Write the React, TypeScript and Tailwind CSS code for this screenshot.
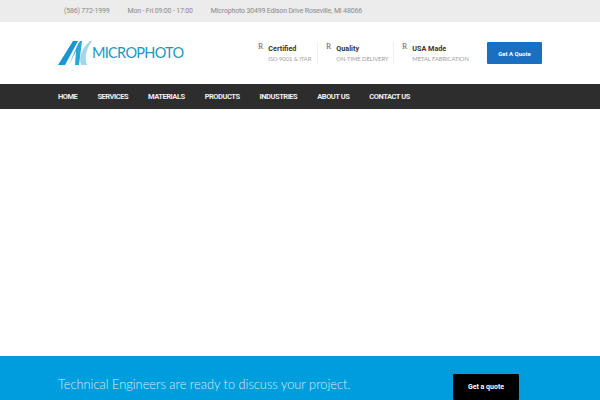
import React from 'react';

const navItems = ['HOME', 'SERVICES', 'MATERIALS', 'PRODUCTS', 'INDUSTRIES', 'ABOUT US', 'CONTACT US'];

const badges = [
  { title: 'Certified', sub: 'ISO 9001 & ITAR', width: 'w-[68px]' },
  { title: 'Quality', sub: 'ON-TIME DELIVERY', width: 'w-[76px]' },
  { title: 'USA Made', sub: 'METAL FABRICATION', width: 'w-[93px]' },
];

const Logo = () => (
  <svg width="34" height="26" viewBox="0 0 34 26" className="shrink-0">
    <path d="M0 25 L15 1 L20 1 L7 25 Z" fill="#1a95cf" />
    <path d="M11 25 L20 4 L22 1 L24 1 L21 25 L17 25 L18 11 Z" fill="#2aa6d8" />
    <path d="M23 25 C20 16 25 7 32 1 L34 1 C29 8 26 16 29 25 Z" fill="#a5d5ea" />
  </svg>
);

const App: React.FC = () => {
  return (
    <div className="w-[600px] h-[400px] bg-white flex flex-col overflow-hidden font-['Roboto',sans-serif]">
      {/* top bar */}
      <div className="h-[22px] bg-[#ececec] flex items-center pl-16 gap-[18px] text-[7px] tracking-[-0.17px] text-[#8a8a8a]">
        <span>(586) 772-1999</span>
        <span>Mon - Fri 09:00 - 17:00</span>
        <span>Microphoto 30499 Edison Drive Roseville, MI 48066</span>
      </div>

      {/* header */}
      <div className="h-[62px] flex items-center pl-[58px] pr-[58px]">
        <div className="flex items-center gap-0">
          <Logo />
          <span className="font-['Lato',sans-serif] text-[14.5px] tracking-[-0.7px] text-[#2196c4] leading-none">MICROPHOTO</span>
        </div>
        <div className="ml-auto flex items-center">
          {badges.map((b, i) => (
            <div
              key={b.title}
              className={`flex h-[22px] gap-[5px] pl-2 ${b.width} ${i < 2 ? 'border-r border-[#eeeeee]' : ''}`}
            >
              <span className="font-['Liberation_Serif',serif] text-[8px] leading-[10px] text-[#666666]">R</span>
              <div className="flex flex-col pt-px">
                <span className="text-[7.2px] leading-[11px] font-bold text-[#333333] whitespace-nowrap">{b.title}</span>
                <span className="font-['Lato',sans-serif] text-[5.8px] leading-[9px] tracking-[-0.05px] text-[#a0a0a0] whitespace-nowrap">{b.sub}</span>
              </div>
            </div>
          ))}
          <button className="w-[55px] h-[22px] bg-[#1b6fc0] rounded-[1px] text-white text-[6px] font-bold">
            Get A Quote
          </button>
        </div>
      </div>

      {/* nav */}
      <div className="h-[25px] bg-[#2d2d2d] flex items-center pl-[58px] gap-5 text-[7.5px] tracking-[-0.47px] font-bold text-[#f0f0f0]">
        {navItems.map(item => (
          <span key={item}>{item}</span>
        ))}
      </div>

      <div className="flex-1" />

      {/* call to action */}
      <div className="h-11 bg-[#009ddc] flex items-start pl-[58px] pr-[81px] pt-[18px]">
        <span className="text-[12.8px] leading-[22px] -mt-[1px] text-[#d0f0fb] font-['Lato',sans-serif] font-light">
          Technical Engineers are ready to discuss your project.
        </span>
        <button className="ml-auto w-[66px] h-[26px] bg-black rounded-[1px] text-white text-[7px] font-bold">
          Get a quote
        </button>
      </div>
    </div>
  );
};

export default App;
